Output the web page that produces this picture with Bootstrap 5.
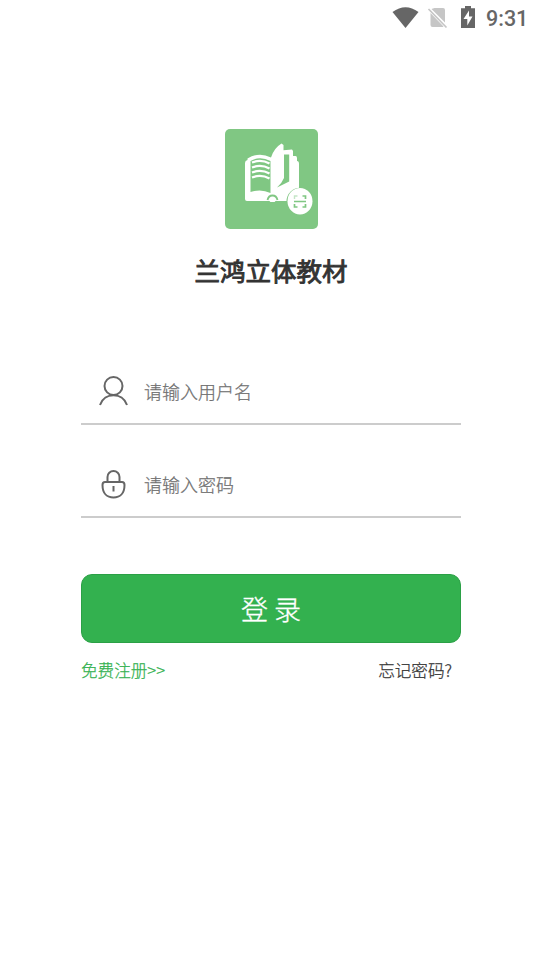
<!DOCTYPE html>
<html lang="zh-CN">
<head>
<meta charset="utf-8">
<meta name="viewport" content="width=device-width, initial-scale=1">
<title>兰鸿立体教材</title>
<link href="https://cdn.jsdelivr.net/npm/bootstrap@5.3.0/dist/css/bootstrap.min.css" rel="stylesheet">
<style>
body{font-family:"Noto Sans CJK SC",sans-serif;font-weight:300;color:#333;background:#fff;height:960px;overflow:hidden}
svg{display:block;flex:none}
.status-row{height:36px;padding:0 13px 0 0;color:#666}
.clock{font:500 21.5px/36px Roboto,sans-serif;width:41px;margin-left:10px;padding-top:2px;white-space:nowrap}
.brand{padding-top:93px;padding-left:2px}
.brand-name{font-size:25.5px;font-weight:400;-webkit-text-stroke:.9px #333;line-height:36px;margin-top:23px}
.login{width:380px;margin:70px 0 0 81px;-webkit-text-stroke:.25px}
.field{height:67px;border-bottom:2px solid #ccc;padding:2px 0 0 17px;margin-bottom:26px}
.field .form-control{font-size:18px;font-weight:300;line-height:27px;color:#333;background:none;border:0;padding:0;margin-left:15px;box-shadow:none}
.field .form-control::placeholder{color:#707070;opacity:1}
.btn-login{height:69px;margin-top:56px;background:#33b14f;border:1px solid #2ba046;border-radius:11px;color:#fff;font-size:27px;font-weight:300;line-height:1;padding:0;-webkit-text-stroke:.35px}
.btn-login:hover{background:#2da548;color:#fff}
.links{font-size:16.6px;line-height:24px;padding:15px 9px 0 0}
.links a{color:#333}
.links .signup{color:#33b14f}
</style>
</head>
<body>
<header class="status-row d-flex align-items-center justify-content-end">
<svg width="86" height="36" viewBox="390 0 86 36" fill="#666">
<path d="M392.500 12Q405.500 2.500 418.500 12L405.500 28Z"/>
<path d="M434.500 8H443Q445 8 445 10V22.500L431.500 9ZM430.500 13L443.500 26.500Q443 27 442 27H432.500Q430.500 27 430.500 25Z" fill="#c6c6c6"/>
<path d="M428.500 9L446.500 27.500" stroke="#c6c6c6" stroke-width="1.700"/>
<path d="M465 6h6v2.200h4V28h-14V8.200h4Z"/>
<path d="M469 10.500l-5.500 8.500h3.800v6.500l5.200-9h-3.500Z" fill="#fff"/>
</svg>
<span class="clock">9:31</span>
</header>
<main>
<div class="brand d-flex flex-column align-items-center">
<svg width="93" height="100" viewBox="0 0 93 100" fill="none">
<rect width="93" height="100" rx="5" fill="#80c783"/>
<path d="M20 34Q20 31.500 22.500 31V29.500Q34 22.500 46 28.500Q49 19 56.500 14.500L58.500 16V21.200L67 20.500L68 22V27H70.500Q72 27 72 29V32Q74 32 74 35V72H22Q20 72 20 70Z" fill="#fff"/>
<path d="M25.500 32Q35 26.500 45.500 32V64Q36 59.500 25.500 63Z" fill="#80c783"/>
<path d="M27 33.500Q36 30 44.500 34.500M27 38.500Q36 35 44.500 39.500M27 43.500Q36 40 44.500 44.500M27 48.500Q36 45 44.500 49.500" stroke="#fff" stroke-width="2.300"/>
<path d="M59 25.500H64.200V52.500L52 58.500Q57 54 59 49Z" fill="#80c783"/>
<path d="M42.500 71Q43.500 66.500 47.500 66.500Q51.500 66.500 52.500 71" stroke="#80c783" stroke-width="1.800"/>
<path d="M44.500 73Q47.500 68.500 50.500 73Z" fill="#fff"/>
<circle cx="75" cy="72.200" r="13.500" fill="#80c783"/>
<ellipse cx="75" cy="72.200" rx="12.500" ry="13.200" fill="#fff"/>
<path d="M77.500 67H80.500V70M80.500 75V78H77.500M72.500 78H69.500V75M69 72.500H81" stroke="#80c783" stroke-width="1.700"/>
<path d="M69.500 70V67H72.500" stroke="#c4e5c6" stroke-width="1.400"/>
</svg>
<h1 class="brand-name mb-0">兰鸿立体教材</h1>
</div>
<form class="login">
<div class="field d-flex align-items-center">
<svg width="31" height="32" viewBox="0 0 31 32" fill="none" stroke="#666" stroke-width="2">
<circle cx="15.500" cy="10" r="9"/><path d="M2 29C6.500 16 24.500 16 29 29"/>
</svg>
<input class="form-control" type="text" placeholder="请输入用户名" aria-label="用户名">
</div>
<div class="field d-flex align-items-center">
<svg width="31" height="32" viewBox="0 0 31 32" fill="none" stroke="#666" stroke-width="2">
<path d="M9.500 13V8a6 6 0 0 1 12 0V13M7 13H24Q26.500 13 26.500 16C26.500 24.500 22 28.500 15.500 28.500S4.500 24.500 4.500 16Q4.500 13 7 13ZM15.500 17v5.500"/>
</svg>
<input class="form-control" type="password" placeholder="请输入密码" aria-label="密码">
</div>
<button class="btn btn-login w-100 d-flex align-items-center justify-content-center" type="button">登 录</button>
<div class="links d-flex justify-content-between">
<a class="signup text-decoration-none" href="#">免费注册&gt;&gt;</a>
<a class="text-decoration-none" href="#">忘记密码?</a>
</div>
</form>
</main>
<script src="https://cdn.jsdelivr.net/npm/bootstrap@5.3.0/dist/js/bootstrap.bundle.min.js"></script>
</body>
</html>
